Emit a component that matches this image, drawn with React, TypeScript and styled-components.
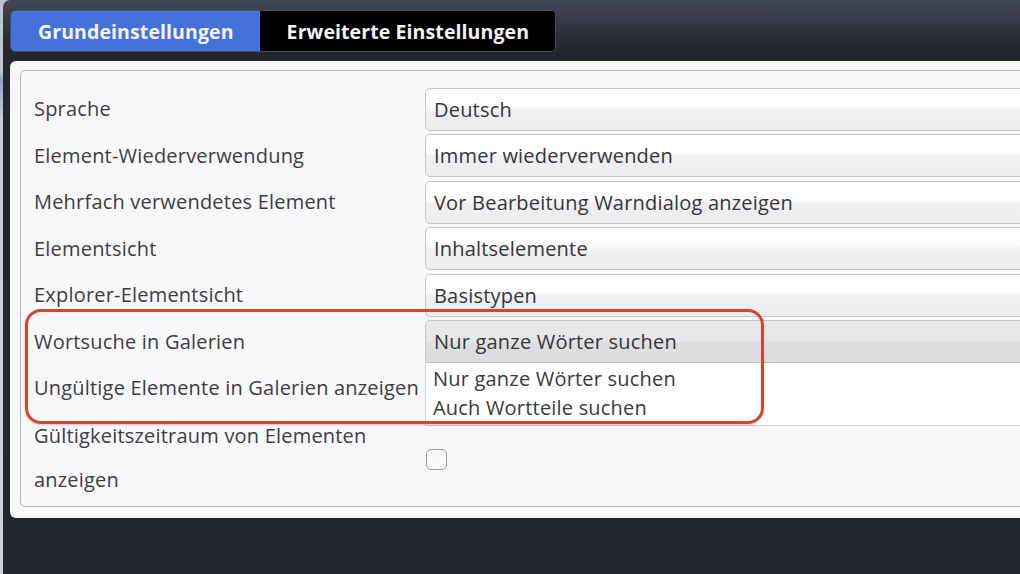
import React from "react";
import styled, { createGlobalStyle } from "styled-components";

const GlobalStyle = createGlobalStyle`
  html, body {
    margin: 0;
    padding: 0;
    height: 574px;
    overflow: hidden;
    background: #c6c9d0;
  }
  #root {
    height: 574px;
    overflow: hidden;
  }
  * { box-sizing: border-box; }
`;

const Backdrop = styled.div`
  height: 574px;
  padding-left: 3px;
  background: linear-gradient(to bottom, #bfc3cb 0px, #c3c7cf 70px, #8fa2c9 80px, #c9ccd3 120px, #cdd0d6 100%);
`;

const Dialog = styled.div`
  width: 1300px;
  height: 590px;
  border-radius: 7px;
  padding: 10px 0 0 7px;
  background: linear-gradient(to bottom, #424856 0px, #343944 22px, #272a33 42px, #23262e 52px, #23262e 100%);
  font-family: "Open Sans", "Noto Sans", sans-serif;
`;

const TabBar = styled.div`
  display: inline-flex;
  height: 42px;
  border: 1px solid #4a4d55;
  border-radius: 5px;
  overflow: hidden;
  background: #000;
`;

const Tab = styled.div<{ $active?: boolean }>`
  display: flex;
  align-items: center;
  padding: 0 26px 0 27px;
  font-size: 19.5px;
  font-weight: 700;
  color: #f4f4f6;
  letter-spacing: 0.1px;
  background: ${(p) => (p.$active ? "#4471da" : "#000")};
`;

const Panel = styled.div`
  margin-top: 9px;
  width: 1280px;
  height: 457px;
  border-radius: 6px;
  background: #f8f8fa;
  padding: 9px 0 0 10px;
`;

const Fieldset = styled.div`
  position: relative;
  height: 437px;
  border: 1px solid #b9b9bd;
  border-radius: 5px;
  padding: 15px 0 0 13px;
`;

const Row = styled.div<{ $tall?: boolean }>`
  display: grid;
  grid-template-columns: 391px 1fr;
  align-items: center;
  height: ${(p) => (p.$tall ? "92px" : "46.5px")};
  padding-top: ${(p) => (p.$tall ? "1px" : "0")};
`;

const Label = styled.div<{ $tall?: boolean }>`
  font-size: 20px;
  letter-spacing: 0.2px;
  color: #3e3e40;
  line-height: ${(p) => (p.$tall ? "44px" : "26px")};
  white-space: ${(p) => (p.$tall ? "normal" : "nowrap")};
  padding-right: ${(p) => (p.$tall ? "40px" : "0")};
`;

const Control = styled.div`
  position: relative;
  height: 43px;
  display: flex;
  align-items: center;
`;

const SelectBox = styled.div<{ $open?: boolean }>`
  width: 100%;
  height: 43px;
  display: flex;
  align-items: center;
  padding-left: 8px;
  border: 1px solid #c6c6ca;
  border-radius: ${(p) => (p.$open ? "5px 5px 0 0" : "5px")};
  font-size: 20px;
  letter-spacing: 0.2px;
  color: #363638;
  background: ${(p) =>
    p.$open
      ? "linear-gradient(to bottom, #e9e9eb 0%, #e6e6e8 48%, #dedee0 54%, #dcdcde 100%)"
      : "linear-gradient(to bottom, #ffffff 0%, #fdfdfd 44%, #f0f0f2 52%, #ececef 100%)"};
`;

const OptionList = styled.div`
  position: absolute;
  top: 100%;
  left: 0;
  right: 0;
  z-index: 2;
  background: #fff;
  border: 1px solid #cfcfd2;
  border-top: none;
  padding: 1px 0 3px 7px;
`;

const Option = styled.div`
  font-size: 20px;
  letter-spacing: 0.2px;
  line-height: 29px;
  color: #3a3a3c;
`;

const Checkbox = styled.span`
  display: block;
  width: 21px;
  height: 21px;
  margin: 2px 0 0 1px;
  border: 1.5px solid #9b9b9f;
  border-radius: 5px;
  background: #fafafb;
`;

const Highlight = styled.div`
  position: absolute;
  left: 4px;
  top: 238px;
  width: 739px;
  height: 115px;
  border: 3px solid #d7432e;
  border-radius: 16px;
  box-shadow: 0 1px 2px rgba(120, 30, 20, 0.25);
  z-index: 3;
  pointer-events: none;
`;

type Setting = {
  label: string;
  value?: string;
  open?: string[];
  checkbox?: boolean;
  tall?: boolean;
};

const settings: Setting[] = [
  { label: "Sprache", value: "Deutsch" },
  { label: "Element-Wiederverwendung", value: "Immer wiederverwenden" },
  { label: "Mehrfach verwendetes Element", value: "Vor Bearbeitung Warndialog anzeigen" },
  { label: "Elementsicht", value: "Inhaltselemente" },
  { label: "Explorer-Elementsicht", value: "Basistypen" },
  {
    label: "Wortsuche in Galerien",
    value: "Nur ganze Wörter suchen",
    open: ["Nur ganze Wörter suchen", "Auch Wortteile suchen"],
  },
  { label: "Ungültige Elemente in Galerien anzeigen", checkbox: true },
  { label: "Gültigkeitszeitraum von Elementen anzeigen", checkbox: true, tall: true },
];

export default function App() {
  return (
    <>
      <GlobalStyle />
      <Backdrop>
        <Dialog>
          <TabBar>
            <Tab $active>Grundeinstellungen</Tab>
            <Tab>Erweiterte Einstellungen</Tab>
          </TabBar>
          <Panel>
            <Fieldset>
              {settings.map((s) => (
                <Row key={s.label} $tall={s.tall}>
                  <Label $tall={s.tall}>{s.label}</Label>
                  <Control>
                    {s.checkbox ? (
                      <Checkbox />
                    ) : (
                      <SelectBox $open={!!s.open}>{s.value}</SelectBox>
                    )}
                    {s.open && (
                      <OptionList>
                        {s.open.map((o) => (
                          <Option key={o}>{o}</Option>
                        ))}
                      </OptionList>
                    )}
                  </Control>
                </Row>
              ))}
              <Highlight />
            </Fieldset>
          </Panel>
        </Dialog>
      </Backdrop>
    </>
  );
}
